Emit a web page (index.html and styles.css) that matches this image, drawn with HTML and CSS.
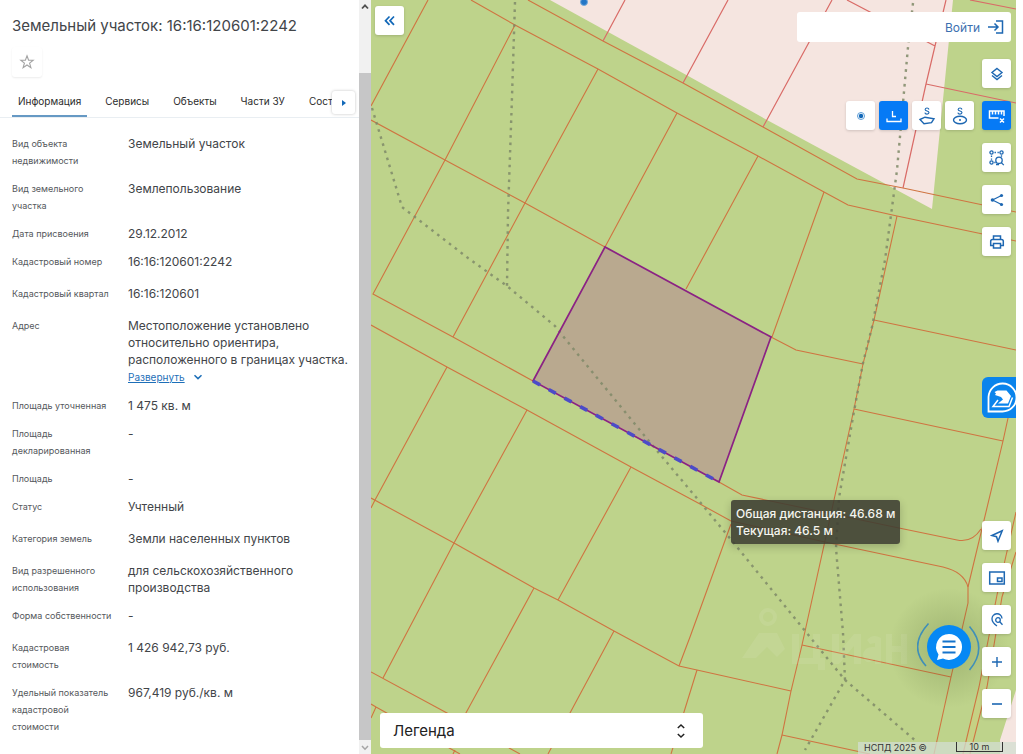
FILE: index.html
```html
<!DOCTYPE html>
<html lang="ru">
<head>
<meta charset="utf-8">
<title>Земельный участок: 16:16:120601:2242</title>
<link rel="stylesheet" href="styles.css">
</head>
<body>
<div class="app">
  <aside class="panel">
    <div class="card">
      <h1 class="title">Земельный участок: 16:16:120601:2242</h1>
      <button class="fav" type="button" aria-label="В избранное">
        <svg width="16" height="16" viewBox="0 0 16 16"><path d="M8 1.800l1.600 4.300 4.600.2-3.600 2.800 1.300 4.500L8 11l-3.900 2.600 1.300-4.500L1.800 6.300l4.600-.2z" fill="none" stroke="#a3a3a3" stroke-width="1.100"/></svg>
      </button>
      <div class="tabs">
        <nav class="tab-list">
          <a class="tab active" href="#info">Информация</a>
          <a class="tab" href="#services">Сервисы</a>
          <a class="tab" href="#objects">Объекты</a>
          <a class="tab" href="#parts">Части ЗУ</a>
          <a class="tab" href="#compose">Состав</a>
          <a class="tab" href="#rights">Права</a>
        </nav>
        <button class="tab-next" type="button" aria-label="Следующие вкладки">
          <svg width="6" height="8" viewBox="0 0 6 8"><path d="M1 1l4 3-4 3z" fill="#1268b8"/></svg>
        </button>
      </div>
      <dl class="props">
        <div class="row"><dt>Вид объекта недвижимости</dt><dd>Земельный участок</dd></div>
        <div class="row"><dt>Вид земельного участка</dt><dd>Землепользование</dd></div>
        <div class="row"><dt>Дата присвоения</dt><dd>29.12.2012</dd></div>
        <div class="row tall"><dt>Кадастровый номер</dt><dd>16:16:120601:2242</dd></div>
        <div class="row tall"><dt>Кадастровый квартал</dt><dd>16:16:120601</dd></div>
        <div class="row"><dt>Адрес</dt><dd>Местоположение установлено относительно ориентира, расположенного в границах участка.
          <a class="expand" href="#address"><span>Развернуть</span><svg width="10" height="8" viewBox="0 0 10 8"><path d="M1.500 2.200L5 5.600l3.500-3.400" fill="none" stroke="#1d6fb8" stroke-width="1.500"/></svg></a></dd></div>
        <div class="row"><dt>Площадь уточненная</dt><dd>1 475 кв. м</dd></div>
        <div class="row"><dt>Площадь декларированная</dt><dd>-</dd></div>
        <div class="row"><dt>Площадь</dt><dd>-</dd></div>
        <div class="row tall"><dt>Статус</dt><dd>Учтенный</dd></div>
        <div class="row tall"><dt>Категория земель</dt><dd>Земли населенных пунктов</dd></div>
        <div class="row"><dt>Вид разрешенного использования</dt><dd>для сельскохозяйственного производства</dd></div>
        <div class="row tall"><dt>Форма собственности</dt><dd>-</dd></div>
        <div class="row"><dt>Кадастровая стоимость</dt><dd>1 426 942,73 руб.</dd></div>
        <div class="row"><dt>Удельный показатель кадастровой стоимости</dt><dd>967,419 руб./кв. м</dd></div>
      </dl>
    </div>
    <div class="scroll" aria-hidden="true">
      <svg width="12" height="14" viewBox="0 0 12 14"><path d="M3 8.500l3-3.200 3 3.200" fill="none" stroke="#505050" stroke-width="1.800"/></svg>
      <span class="track"></span>
      <span class="thumb"></span>
      <svg width="12" height="14" viewBox="0 0 12 14"><path d="M3 6l3 3.200L9 6" fill="none" stroke="#a5a5a5" stroke-width="1.500"/></svg>
    </div>
  </aside>

  <main class="map">
    <svg class="canvas" viewBox="371 0 645 754" preserveAspectRatio="xMinYMin slice" role="img" aria-label="Карта участка">
      <rect x="371" width="1200" height="1200" fill="#bed38b"/>
      <path d="M550 0L690 77l77 43 165 89L953 0zM1016 690l-16 50v14h16z" fill="#f5e5e0"/>
      <path d="M1016 512l-19 83-18 92-16 67h7l17-67 15-90 14-45z" fill="#c6d184"/>
      <g fill="none" stroke="#cf7441" stroke-width="1.100">
        <path d="M428 0L371 106M471 0l44 25 83 44 79 44 81 43 66 36 24 13 49 11 119 25M528 0l75 41 80 42 80 44 94 52 46 9 113 24"/>
        <path d="M515 25l-70 135-72 134 80 43 80 44M598 69l-73 134-72 134M677 113l-72 134M371 120l74 40 80 43 80 44M758 156l-72 133M824 192l-52 145M771 337l25 13 67 14"/>
        <path d="M897 216l-23 104-11 44-9 45-20 91-32 145-11 46-9 44-5 19M874 320l142 30M854 409l149 32M1015 386l-12 55-35 146M968 587v16l-17 74-17 77"/>
        <path d="M371 325l76 42 80 43 104 57 69 37 31 17 94 21 118 25q21 5 25 20M719 482l23 13 157 33 58 12q15 3 24-11"/>
        <path d="M447 367l-72 133-4 8M371 498l83 45 80 45 24 12 56 31 65 35 18 4 94 21M527 410l-73 133-71 135M631 467l-73 133M534 588l-73 134M614 631l-66 123M697 670l-26 84M731 524l-41 113-11 29"/>
        <path d="M371 672l76 41 73 41M371 704l5 3 84 47M376 707l-5 11M455 750l-2 4M802 645l149 32M782 735l88 19"/>
        <path d="M1016 512l-19 83-18 92-16 67M1016 552l-14 45-15 90-17 67"/>
      </g>
      <g fill="none" stroke="#d96b67" stroke-width="1.200">
        <path d="M625 0l-22 41M728 0l-45 83M832 0l-69 127M946 0l-11 46-9 38-23 104M847 0l88 46M926 84l90 19M970 0l46 9"/>
      </g>
      <path d="M605 247l166 90-52 145-186-101z" fill="#b9a98f"/>
      <g fill="none" stroke="#7f8a68" stroke-width="2.400" stroke-dasharray="2.600 4.800" opacity=".85">
        <path d="M372 108l30 99 66 51 39 28 48 40 7 9 86 105 52 62 37 45 108 133 72 62M515 2l-3 95-4 116-1 73"/>
        <path d="M913 3l-5 44-11 123-12 90-13 67-9 36-10 54-14 81-3 50 7 85 2 47-40 70"/>
      </g>
      <path d="M533 381l72-134 166 90-52 145z" fill="none" stroke="#8b2284" stroke-width="1.700"/>
      <path d="M533 381l186 101" fill="none" stroke="#4c4bc8" stroke-width="3.600" stroke-dasharray="8 9.900"/>
      <circle cx="584" cy="2" r="3.500" fill="#2476c6" stroke="#76abdc"/>
      <g opacity=".08" fill="#fff">
        <circle cx="768" cy="617" r="7" fill="none" stroke="#fff" stroke-width="4"/>
        <path d="M742 658l17-25h18l8 16-8 8-10-10-11 11z"/>
        <path d="M792 634h7v24h14v-24h7v24h5v12h-7v-6h-26zM832 634h7v18l15-18h7v30h-7v-18l-15 18h-7zM867 640q6-7 14-2v26h-6v-5q-10 8-12-4 1-9 12-8v-4l-5 1zM886 634h6v12h9v-12h6v30h-6v-12h-9v12h-6z"/>
      </g>
    </svg>

    <button class="sq collapse" type="button" aria-label="Свернуть панель">
      <svg width="14" height="14" viewBox="0 0 14 14"><path d="M6.500 2.500L2.500 6.700l4 4.200M11 2.500L7 6.700l4 4.200" fill="none" stroke="#1268b8" stroke-width="1.700"/></svg>
    </button>

    <div class="tooltip">Общая дистанция: 46.68 м<br>Текущая: 46.5 м</div>

    <div class="controls-top">
      <a class="login" href="#login">Войти
        <svg width="16" height="14" viewBox="0 0 16 14"><path d="M8 1h6.500v12H8M0 7h10M6.500 3.500L10 7l-3.500 3.500" fill="none" stroke="#1d67b2" stroke-width="1.500"/></svg>
      </a>
      <button class="sq" type="button" aria-label="Слои">
        <svg width="16" height="16" viewBox="0 0 16 16"><path d="M8 2.500l5 4-5 4-5-4zM3 9.500l5 4 5-4" fill="none" stroke="#1d67b2" stroke-width="1.400"/></svg>
      </button>
      <div class="measure">
        <button class="sq" type="button" aria-label="Точка">
          <svg width="10" height="10" viewBox="0 0 10 10"><circle cx="5" cy="5" r="3.500" fill="none" stroke="#5c9dd8"/><circle cx="5" cy="5" r="2.200" fill="#1268b8"/></svg>
        </button>
        <button class="sq on" type="button" aria-label="Длина">
          <svg width="18" height="18" viewBox="0 0 18 18"><path d="M2 11.500v3h14v-3M7.500 4v5.500h3.500" fill="none" stroke="#fff" stroke-width="1.300"/></svg>
        </button>
        <button class="sq" type="button" aria-label="Площадь">
          <svg width="18" height="20" viewBox="0 0 18 20"><path d="M2 13.500l5-2.300 9 1.500-2.500 4L6 17.800z" fill="none" stroke="#1d67b2" stroke-width="1.400"/><path d="M11 3.500Q10.600 2 9 2T7.100 3.500q0 1.100 1.900 1.500t2 1.600q0 1.500-2 1.500T6.900 6.600" fill="none" stroke="#1d67b2" stroke-width="1.100"/></svg>
        </button>
        <button class="sq" type="button" aria-label="Площадь круга">
          <svg width="18" height="20" viewBox="0 0 18 20"><ellipse cx="9" cy="14" rx="6.500" ry="3.800" fill="none" stroke="#1d67b2" stroke-width="1.400"/><circle cx="9" cy="14" r="1" fill="#1d67b2"/><path d="M11 3.500Q10.600 2 9 2T7.100 3.500q0 1.100 1.900 1.500t2 1.600q0 1.500-2 1.500T6.900 6.600" fill="none" stroke="#1d67b2" stroke-width="1.100"/></svg>
        </button>
        <button class="sq on ruler" type="button" aria-label="Измерения">
          <svg width="18" height="16" viewBox="0 0 18 16"><path d="M10.500 10H1.500V3h14.500v5M4.500 3v3.500M7.500 3v3.500M10.500 3v3.500M13.500 3v3.500M12 10.500l4 4M16 10.500l-4 4" fill="none" stroke="#fff" stroke-width="1.500"/></svg>
        </button>
      </div>
      <button class="sq" type="button" aria-label="Поиск по области">
        <svg width="18" height="18" viewBox="0 0 18 18" fill="none" stroke="#1d67b2" stroke-width="1.300"><circle cx="3.500" cy="3.500" r="1.600"/><circle cx="13.500" cy="3.500" r="1.600"/><circle cx="3.500" cy="13.500" r="1.600"/><circle cx="11" cy="11.300" r="3.200"/><path d="M13.300 13.600l2.500 2.500M6.500 3.500h1.400M9.500 3.500h1.300M3.500 6.500v1.400M3.500 9.500v1.300M13.500 6.200v1.500M6.300 13.500h1.300M8 15.500h3"/></svg>
      </button>
      <button class="sq" type="button" aria-label="Поделиться">
        <svg width="14" height="14" viewBox="0 0 14 14"><path d="M11.500 2.500L2.500 7l9 4.500" fill="none" stroke="#1d67b2" stroke-width="1.200"/><g fill="#1d67b2"><circle cx="11.500" cy="2.500" r="1.600"/><circle cx="2.500" cy="7" r="1.800"/><circle cx="11.500" cy="11.500" r="1.600"/></g></svg>
      </button>
      <button class="sq" type="button" aria-label="Печать">
        <svg width="16" height="16" viewBox="0 0 16 16" fill="none" stroke="#1d67b2" stroke-width="1.500"><path d="M4.500 5V2h7v3M4.500 11.500H1.700V7.300Q1.700 5.500 3.500 5.500h9q1.800 0 1.800 1.800v4.200h-2.800M4.500 9.500h7V14h-7z"/></svg>
      </button>
    </div>

    <button class="promo" type="button" aria-label="Информация о регионе">
      <svg width="31" height="33" viewBox="0 0 31 33"><path d="M2.500 30.500V16A14 14 0 1 1 16.500 30.500z" fill="none" stroke="#fff" stroke-width="1.800"/><path d="M8.500 11l3-1.500h9l4.500 5.500-3 7.500H12l5-4-2-2.500-6-2 1-1.500z" fill="#fff"/><path d="M12 19l-5 6.500h16l3.500-9" fill="none" stroke="#fff" stroke-width="1.500"/></svg>
    </button>

    <button class="chat" type="button" aria-label="Чат">
      <svg width="64" height="64" viewBox="0 0 64 64"><path d="M11.500 7.500Q-9 30 9 50M52.500 10.500Q71 32 52.500 54" fill="none" stroke="#3f8fb8" stroke-width="1.600"/><circle cx="32" cy="31" r="22" fill="#0688f4"/><path d="M32 18a13 13 0 1 1-6 24.500l-6 1.500 1.500-5.500A13 13 0 0 1 32 18z" fill="#fff"/><path d="M25.500 25.500h13M25.500 31h13M25.500 36.500h13" stroke="#1674cc" stroke-width="1.900"/></svg>
    </button>

    <div class="controls-bottom">
      <button class="sq" type="button" aria-label="Моё местоположение">
        <svg width="14" height="14" viewBox="0 0 14 14"><path d="M12.200 1.800L1.800 6.500l4.700 1.200 1.500 4.500z" fill="none" stroke="#1d67b2" stroke-width="1.500"/></svg>
      </button>
      <button class="sq" type="button" aria-label="Обзорная карта">
        <svg width="18" height="16" viewBox="0 0 18 16"><path d="M1.700 2h14.600v12H1.700zM9.500 8h4.500v3.500H9.500z" fill="none" stroke="#1d67b2" stroke-width="1.500"/></svg>
      </button>
      <button class="sq" type="button" aria-label="Поиск объекта">
        <svg width="14" height="14" viewBox="0 0 14 14" fill="none" stroke="#1d67b2" stroke-width="1.300"><path d="M7 13Q2 9.500 2 6a5 5 0 0 1 10-.5"/><circle cx="8" cy="7" r="2.300"/><path d="M9.700 8.700l2.800 3"/></svg>
      </button>
      <button class="sq" type="button" aria-label="Приблизить">
        <svg width="14" height="14" viewBox="0 0 14 14"><path d="M7 2v10M2 7h10" stroke="#1d67b2" stroke-width="1.400"/></svg>
      </button>
      <button class="sq" type="button" aria-label="Отдалить">
        <svg width="14" height="14" viewBox="0 0 14 14"><path d="M2 7h10" stroke="#1d67b2" stroke-width="1.600"/></svg>
      </button>
    </div>

    <button class="legend" type="button">Легенда
      <svg width="10" height="16" viewBox="0 0 10 16"><path d="M1.800 5L5 2l3.200 3M1.800 11L5 14l3.200-3" fill="none" stroke="#222" stroke-width="1.500"/></svg>
    </button>

    <footer class="credits"><span>НСПД 2025 ©</span><span class="scale">10 m</span></footer>
  </main>
</div>
</body>
</html>
```
FILE: styles.css
```css
* { box-sizing: border-box; }

body {
  margin: 0;
  background: #fff;
  color: #424549;
  font-family: Inter, "Noto Sans", sans-serif;
}

button {
  padding: 0;
  border: 0;
  font: inherit;
  cursor: pointer;
}

a { text-decoration: none; }

svg { display: block; flex: none; }

.app {
  display: grid;
  grid-template-columns: 371px 1fr;
  min-height: 100vh;
  padding-right: 7px;
}

/* Left panel */
.panel { display: flex; }

.card {
  flex: 1;
  min-width: 0;
}

.title {
  margin: 0;
  padding: 16px 12px 11px;
  font-size: 15px;
  font-weight: 400;
  line-height: 20px;
}

.fav {
  display: grid;
  place-items: center;
  width: 30px;
  height: 30px;
  margin-left: 12px;
  border-radius: 3px;
  background: #fff;
  box-shadow: 0 1px 2px rgba(0, 0, 0, .08);
}

.tabs {
  position: relative;
  margin-top: 10px;
  border-bottom: 1px solid #e9eef2;
}

.tab-list {
  display: flex;
  gap: 12px;
  padding-left: 12px;
  overflow: hidden;
}

.tab {
  flex: none;
  padding: 7px 6px 6px;
  border-bottom: 2px solid transparent;
  color: #2c2c2c;
  font-size: 10px;
  line-height: 15px;
}

.tab.active { border-color: #6699c4; }

.tab-next {
  position: absolute;
  top: 4px;
  right: 4px;
  display: grid;
  place-items: center;
  width: 23px;
  height: 23px;
  border-radius: 3px;
  background: #fff;
  box-shadow: 0 0 3px rgba(0, 0, 0, .25);
}

.props {
  display: grid;
  gap: 11px;
  margin: 0;
  padding: 17px 8px 8px 12px;
}

.row {
  display: grid;
  grid-template-columns: 100px 1fr;
  column-gap: 16px;
  line-height: 17px;
}

.row.tall { padding-bottom: 4px; }

dt {
  color: #55585c;
  font-size: 9px;
}

dd {
  margin: 0;
  font-size: 12px;
}

.expand {
  display: flex;
  align-items: center;
  gap: 8px;
  height: 18px;
  color: #1d6fb8;
  font-size: 10px;
}

.expand span { text-decoration: underline; }

.scroll {
  display: flex;
  flex-direction: column;
  width: 12px;
  background: #f1f1f1;
}

.track { height: 59px; }

.thumb {
  flex: 1;
  background: #c6c6c7;
}

/* Map */
.map {
  position: relative;
  overflow: hidden;
  background: #bed38b;
}

.canvas {
  position: absolute;
  width: 100%;
  height: 100%;
}

.sq {
  display: grid;
  place-items: center;
  width: 29px;
  height: 29px;
  border-radius: 3px;
  background: #fff;
  box-shadow: 0 1px 3px rgba(0, 0, 0, .16);
}

.sq.on { background: #067af5; }

.collapse {
  position: absolute;
  top: 6px;
  left: 4px;
}

.controls-top,
.controls-bottom {
  position: absolute;
  right: 5px;
  display: flex;
  flex-direction: column;
  align-items: flex-end;
  gap: 13px;
}

.controls-top { top: 12px; }

.controls-bottom { bottom: 36px; }

.login {
  display: flex;
  align-items: center;
  justify-content: flex-end;
  gap: 8px;
  width: 214px;
  height: 30px;
  margin-bottom: 4px;
  padding-right: 7px;
  border-radius: 3px;
  background: #fff;
  color: #3c70b0;
  font-size: 12px;
}

.measure {
  display: flex;
  gap: 4px;
}

.ruler { margin-left: 4px; }

.tooltip {
  position: absolute;
  top: 500px;
  left: 360px;
  padding: 5px;
  border-radius: 3px;
  background: rgba(62, 61, 50, .88);
  box-shadow: 0 3px 8px rgba(0, 0, 0, .2);
  color: #f5f5ef;
  font-size: 12px;
  font-weight: 500;
  line-height: 17px;
  white-space: nowrap;
}

.promo {
  position: absolute;
  top: 377px;
  right: 0;
  display: grid;
  place-items: center start;
  width: 34px;
  height: 41px;
  padding-left: 4px;
  border-radius: 6px 0 0 6px;
  overflow: hidden;
  background: #0a84ec;
}

.chat {
  position: absolute;
  right: 7px;
  bottom: 46px;
  display: grid;
  place-items: center;
  width: 120px;
  height: 120px;
  border-radius: 50%;
  background: radial-gradient(closest-side, rgba(60, 80, 30, .16) 35%, transparent);
}

.legend {
  position: absolute;
  bottom: 6px;
  left: 9px;
  display: flex;
  align-items: center;
  justify-content: space-between;
  width: 323px;
  height: 35px;
  padding: 0 17px 0 13px;
  border-radius: 3px;
  background: #fff;
  color: #222;
  font-size: 15px;
}

.credits {
  position: absolute;
  right: 0;
  bottom: 0;
  display: flex;
  justify-content: space-between;
  width: 158px;
  height: 12px;
  padding: 0 13px 0 6px;
  background: rgba(210, 221, 210, .75);
  color: #333;
  font-size: 9px;
  line-height: 12px;
}

.scale {
  width: 47px;
  height: 10px;
  border: 1px solid #333;
  border-top: 0;
  line-height: 10px;
  text-align: center;
}
```
